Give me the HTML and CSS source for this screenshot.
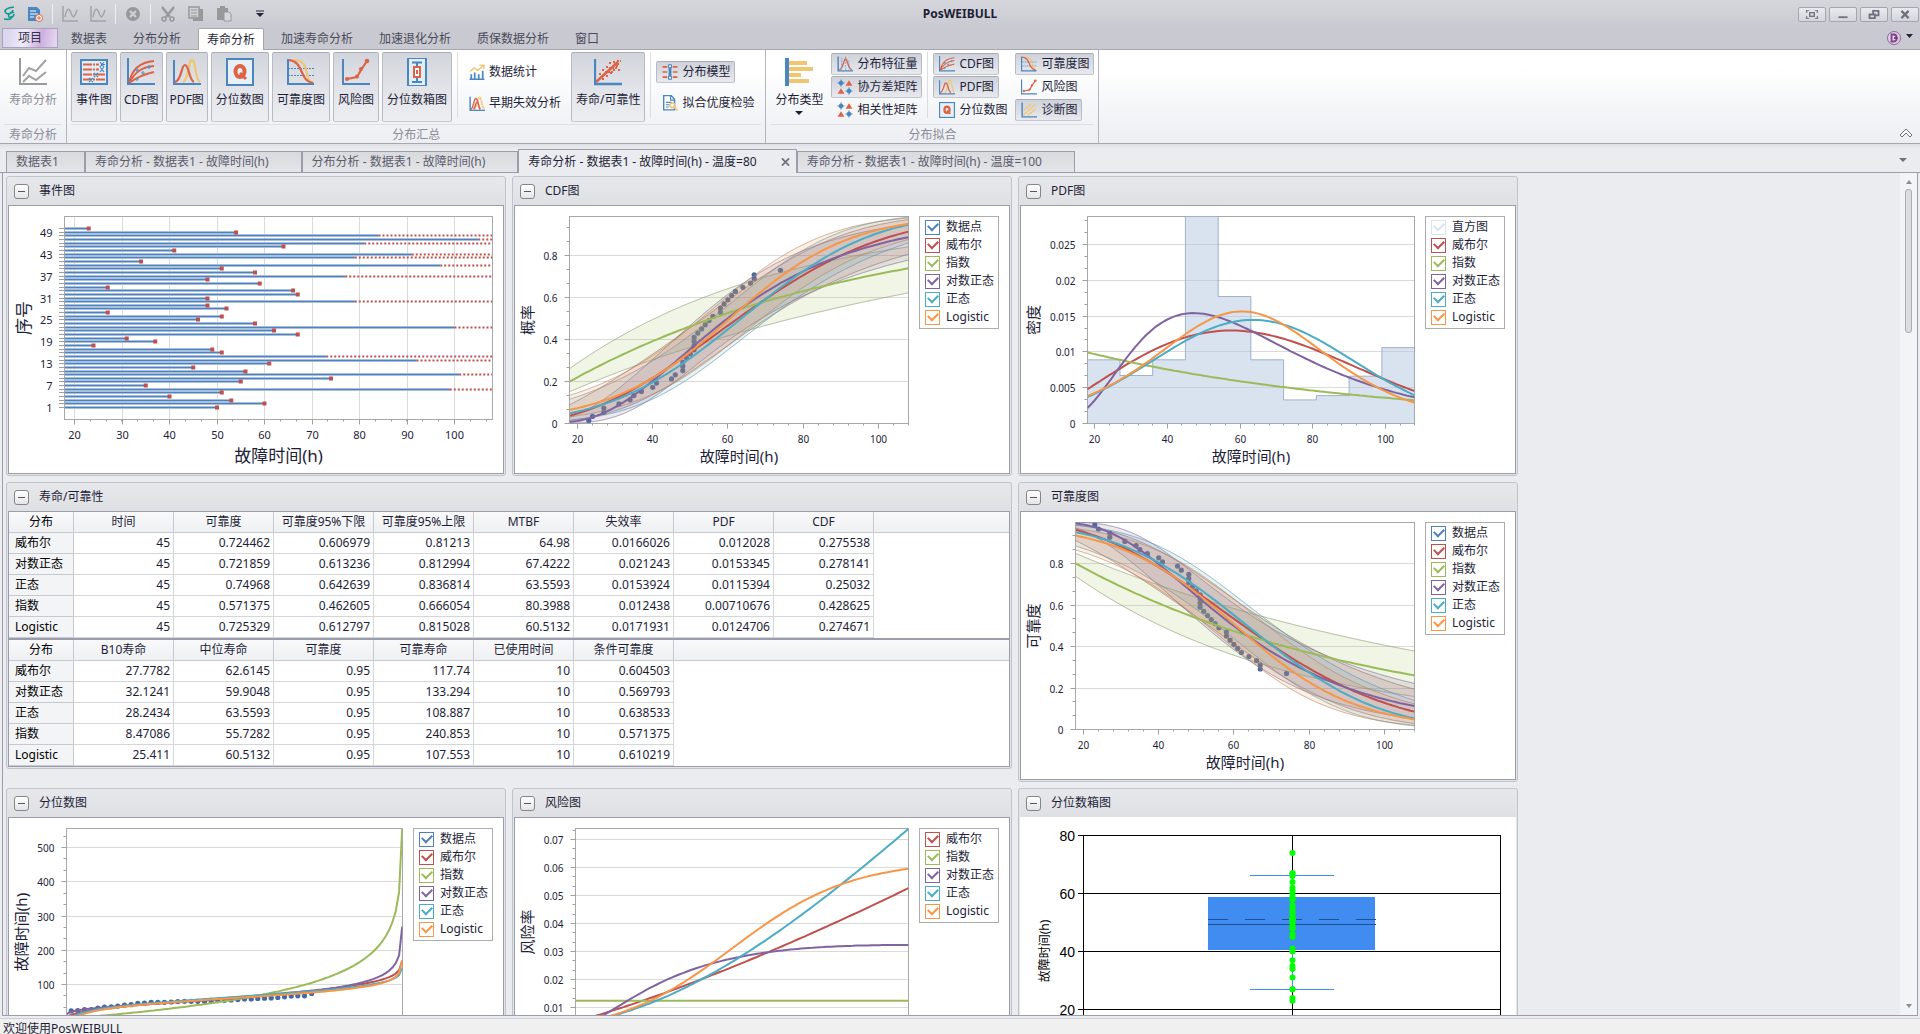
FILE: index.html
```html
<!DOCTYPE html>
<html lang="zh-CN">
<head>
  <meta charset="UTF-8" />
  <meta name="viewport" content="width=device-width, initial-scale=1.0" />
  <title>PosWEIBULL</title>
  <link rel="stylesheet" href="styles.css">
</head>
<body>
  <!-- Shared icons -->
  <svg class="sprite" aria-hidden="true">
    <symbol id="i-line" viewBox="0 0 28 28">
      <path d="M1 0V26H28" fill="none" stroke="#9a9a9a" stroke-width="2"/>
      <path d="M4 18L10 10L17 13L27 2M4 24L10 18L17 22L27 14" fill="none" stroke="#a2a2a2" stroke-width="2"/>
    </symbol>
    <symbol id="i-event" viewBox="0 0 28 28">
      <rect x="1" y="2" width="26" height="24" fill="#e3edf6" stroke="#4a86c0" stroke-width="2"/>
      <path d="M3 6.500H19M3 11.500H19M3 16.500H25M3 21.500H25" stroke="#dd6344" stroke-width="2" stroke-dasharray="9 1 2 1"/>
      <path d="M20 4l4 5M24 4l-4 5M21 6.500h4M20 9l4 5M24 9l-4 5M14 15l4 4M18 15l-4 4M9 20l4 4M13 20l-4 4" stroke="#4a86c0" stroke-width="1.200"/>
    </symbol>
    <symbol id="i-cdf" viewBox="0 0 28 28">
      <path d="M2 25C5 10 14 4 27 3M2 25C8 14 15 9 27 8M2 25C9 20 17 16 27 14" fill="none" stroke="#dd6344" stroke-width="1.900"/>
      <path d="M8 12h4M10 10v4M14 15h4M16 13v4M20 9h4M22 7v4M9 21h3M10 20v3" stroke="#5c93c7" stroke-width="1.200"/>
      <path d="M1 0V26H28" fill="none" stroke="#4a86c0" stroke-width="2"/>
    </symbol>
    <symbol id="i-pdf" viewBox="0 0 28 28">
      <path d="M10 24C16 22 15 2 19 2S22 22 27 24" fill="none" stroke="#f0c673" stroke-width="2.300"/>
      <path d="M2 24C9 22 8 7 12 7S16 22 21 24" fill="none" stroke="#dd6344" stroke-width="2.200"/>
      <path d="M1 2V26H28" fill="none" stroke="#4a86c0" stroke-width="2"/>
    </symbol>
    <symbol id="i-q" viewBox="0 0 28 28">
      <rect x="1" y="1" width="26" height="26" fill="#e8f0f7" stroke="#4a86c0" stroke-width="2"/>
      <ellipse cx="14" cy="13.500" rx="4.500" ry="5.500" fill="none" stroke="#dd6344" stroke-width="4"/>
      <path d="M14 15l6 6" stroke="#dd6344" stroke-width="3"/>
    </symbol>
    <symbol id="i-rel" viewBox="0 0 28 28">
      <path d="M1 10.500H27M1 17.500H27" stroke="#4a86c0" stroke-width="1.200" stroke-dasharray="2 1"/>
      <path d="M7 2C25 2 15 23 27 25" fill="none" stroke="#f0c673" stroke-width="2.200"/>
      <path d="M2 2C18 4 11 22 26 25" fill="none" stroke="#dd6344" stroke-width="2.200"/>
      <path d="M1 1V26H27" fill="none" stroke="#4a86c0" stroke-width="2"/>
    </symbol>
    <symbol id="i-risk" viewBox="0 0 28 28">
      <path d="M5 21L15 19L19 12L25 3" fill="none" stroke="#dd6344" stroke-width="2.200"/>
      <circle cx="5" cy="21" r="2" fill="#dd6344"/><circle cx="15" cy="18.500" r="2" fill="#dd6344"/><circle cx="19" cy="11" r="2" fill="#dd6344"/><circle cx="25" cy="3" r="2.300" fill="#dd6344"/>
      <path d="M1 1V26H28" fill="none" stroke="#4a86c0" stroke-width="2"/>
    </symbol>
    <symbol id="i-box" viewBox="0 0 28 28">
      <rect x="5" y="0" width="18" height="28" fill="#e3edf6" stroke="#4a86c0" stroke-width="2"/>
      <path d="M9 4.500H19M9 24H19M14 4V9M14 19V24" stroke="#4a86c0" stroke-width="2"/>
      <rect x="11" y="9" width="6" height="10" fill="#fff" stroke="#dd6344" stroke-width="2"/>
      <path d="M14 12v4" stroke="#dd6344" stroke-width="2"/>
    </symbol>
    <symbol id="i-scatter" viewBox="0 0 28 28">
      <path d="M2 24L24 4" stroke="#dd6344" stroke-width="2.500"/>
      <path d="M8 12h3M5 16h3M12 9h3M15 5h3M19 4h3M22 8h3M19 12h3M16 15h3M12 18h3M8 21h3M11 14h8M15 10h8M20 6h5M23 3h4M24 12h2M9 17h3" stroke="#dd6344" stroke-width="2.200" stroke-dasharray="2 1"/>
      <path d="M1 1V26H28" fill="none" stroke="#4a86c0" stroke-width="2.300"/>
    </symbol>
    <symbol id="i-types" viewBox="0 0 28 28">
      <path d="M3 5H22M3 11H28M3 17H16M3 23H24" stroke="#f0c673" stroke-width="4"/>
      <path d="M2 0V28" stroke="#4a86c0" stroke-width="4"/>
    </symbol>
    <symbol id="i-stats" viewBox="0 0 28 28">
      <path d="M4 18V27M10 15V27M17 18V27M24 12V27M1 27H27" stroke="#4a86c0" stroke-width="3"/>
      <path d="M2 13L9 7L15 11L25 3M18 2H26V9" fill="none" stroke="#f0c673" stroke-width="2.500"/>
    </symbol>
    <symbol id="i-early" viewBox="0 0 28 28">
      <path d="M9 25C15 20 14 4 18 4S22 20 27 25" fill="none" stroke="#f0c673" stroke-width="3" stroke-dasharray="4 1"/>
      <path d="M3 25C9 22 8 6 12 6S16 20 20 25M8 25C12 20 12 12 14 12S17 22 19 25" fill="none" stroke="#dd6344" stroke-width="2.500"/>
      <path d="M2 3V27H28" fill="none" stroke="#4a86c0" stroke-width="2.500"/>
    </symbol>
    <symbol id="i-model" viewBox="0 0 28 28">
      <path d="M1 5H9M1 14H9M1 23H9M19 5H27M19 14H27M19 23H27" stroke="#dd6344" stroke-width="3"/>
      <path d="M14 5V23" stroke="#4a86c0" stroke-width="5"/>
      <circle cx="14" cy="4" r="3" fill="#fff" stroke="#4a86c0" stroke-width="2"/><circle cx="14" cy="24" r="3" fill="#fff" stroke="#4a86c0" stroke-width="2"/>
    </symbol>
    <symbol id="i-fit" viewBox="0 0 28 28">
      <path d="M3 1H16L22 8V26H3Z" fill="#fff" stroke="#4a86c0" stroke-width="2.500"/>
      <path d="M15 1V9H22M7 13H17M7 17H13M7 21H12" fill="none" stroke="#4a86c0" stroke-width="2"/>
      <circle cx="18" cy="18" r="4" fill="#fff" stroke="#f0c673" stroke-width="3"/><path d="M21 21l6 6" stroke="#f0c673" stroke-width="3"/>
    </symbol>
    <symbol id="i-matrix" viewBox="0 0 28 28">
      <circle cx="7" cy="7" r="4" fill="#4a86c0"/><circle cx="21" cy="21" r="4" fill="#4a86c0"/>
      <path d="M1 7H13M7 1V13M15 21H27M21 15V27" stroke="#4a86c0" stroke-width="2"/>
      <path d="M21 2L27 12H15ZM7 16L13 26H1Z" fill="#dd6344"/>
    </symbol>
    <symbol id="i-feature" viewBox="0 0 28 28">
      <path d="M4 24C12 22 11 5 15 5S18 22 26 24" fill="none" stroke="#dd6344" stroke-width="2.500"/>
      <path d="M8 3V24M15 1V24M21 8V24" stroke="#6b9ccc" stroke-width="1.500" stroke-dasharray="3 2"/>
      <path d="M2 1V26H28" fill="none" stroke="#4a86c0" stroke-width="2.500"/>
    </symbol>
    <symbol id="i-diag" viewBox="0 0 28 28">
      <path d="M4 23L25 4M5 14L17 4M12 23L26 12" stroke="#f0c673" stroke-width="3" stroke-dasharray="4 1"/>
      <path d="M2 1V26H28" fill="none" stroke="#4a86c0" stroke-width="2.500"/>
    </symbol>
    <symbol id="i-wave" viewBox="0 0 16 16">
      <path d="M1 0V15H16" fill="none" stroke="#a3a3a6" stroke-width="1.500"/>
      <path d="M3 11C5 1 7 2 9 7S12 13 15 4" fill="none" stroke="#a3a3a6" stroke-width="1.500"/>
    </symbol>
  </svg>

  <div class="app">
    <header class="titlebar">
      <div class="quick">
        <svg class="logo" viewBox="0 0 12 16"><path d="M11 1C2 2 1 5 3 7S9 7 10 4M11 7C9 5 4 9 6 11S11 10 11 8M1 13C7 14 9 13 8 10" fill="none" stroke="#109a94" stroke-width="1.600"/></svg>
        <button aria-label="新建项目"><svg viewBox="0 0 16 16"><path d="M1 1H10L13 4V15H1Z" fill="#4a86c0"/><path d="M3 5H9M3 8H11M3 11H7" stroke="#fff"/><circle cx="12" cy="12" r="3.500" fill="#fff" stroke="#dd6344"/><path d="M10 12H14M12 10V14" stroke="#dd6344"/></svg></button>
        <i class="bar"></i>
        <button aria-label="图表一"><svg><use href="#i-wave"/></svg></button>
        <button aria-label="图表二"><svg><use href="#i-wave"/></svg></button>
        <i class="bar"></i>
        <button aria-label="关闭"><svg viewBox="0 0 16 16"><circle cx="8" cy="8" r="7" fill="#98989b"/><path d="M5 5l6 6M11 5l-6 6" stroke="#d0d0d5" stroke-width="2.200"/></svg></button>
        <i class="bar"></i>
        <button aria-label="剪切"><svg viewBox="0 0 16 16"><path d="M2 1L10 11M14 1L6 11" stroke="#98989b" stroke-width="2.500"/><circle cx="4" cy="13" r="2" fill="none" stroke="#98989b" stroke-width="1.500"/><circle cx="12" cy="13" r="2" fill="none" stroke="#98989b" stroke-width="1.500"/></svg></button>
        <button aria-label="复制"><svg viewBox="0 0 16 16"><path d="M5 3H15V15H5Z" fill="#98989b"/><path d="M1 1H11V12H1Z" fill="#d0d0d5" stroke="#98989b" stroke-width="1.500"/><path d="M3 4H9M3 7H9M3 10H9" stroke="#98989b"/></svg></button>
        <button aria-label="粘贴"><svg viewBox="0 0 16 16"><path d="M1 2H12V14H1ZM4 0H9V3H4Z" fill="#98989b"/><path d="M8 6H13L15 8V15H8Z" fill="#d8d8dc" stroke="#98989b"/></svg></button>
        <button class="more" aria-label="更多"><svg viewBox="0 0 8 8"><path d="M0 1H8" stroke="#23233a"/><path d="M0 3H8L4 7Z" fill="#23233a"/></svg></button>
      </div>
      <h1>PosWEIBULL</h1>
      <div class="window-buttons">
        <button aria-label="全屏"><svg viewBox="0 0 12 10"><path d="M0 3V0H3M9 0H12V3M12 7V10H9M3 10H0V7" fill="none" stroke="#6f7180" stroke-width="1.500"/><rect x="3.500" y="3" width="5" height="4" fill="none" stroke="#6f7180" stroke-width="1.500"/></svg></button>
        <button aria-label="最小化"><svg viewBox="0 0 12 10"><path d="M1 8H11" stroke="#6f7180" stroke-width="2"/></svg></button>
        <button aria-label="还原"><svg viewBox="0 0 12 10"><path d="M5 4V1H11V6H8M1 5H7V9H1Z" fill="none" stroke="#6f7180" stroke-width="2"/></svg></button>
        <button aria-label="关闭窗口"><svg viewBox="0 0 12 10"><path d="M2 1L10 9M10 1L2 9" stroke="#6f7180" stroke-width="2.500"/></svg></button>
      </div>
    </header>

    <nav class="menu">
      <button class="project">项目</button>
      <button>数据表</button>
      <button>分布分析</button>
      <button class="active">寿命分析</button>
      <button>加速寿命分析</button>
      <button>加速退化分析</button>
      <button>质保数据分析</button>
      <button>窗口</button>
      <span class="badge"><svg viewBox="0 0 28 16"><circle cx="8" cy="8" r="6.500" fill="#e9c8ec" stroke="#8a6a92"/><path d="M5.500 4.500H8C11.500 4.500 11.500 11.500 8 11.500H5.500ZM8 8H12" fill="none" stroke="#704a80" stroke-width="1.800"/><path d="M20 4H27L23.500 8Z" fill="#23233a"/></svg></span>
    </nav>

    <section class="ribbon">
      <div class="group">
        <div class="tools">
          <button class="big disabled"><svg><use href="#i-line"/></svg>寿命分析</button>
        </div>
        <h2>寿命分析</h2>
      </div>
      <div class="group">
        <div class="tools">
          <button class="big on"><svg><use href="#i-event"/></svg>事件图</button>
          <button class="big on narrow"><svg><use href="#i-cdf"/></svg>CDF图</button>
          <button class="big on narrow"><svg><use href="#i-pdf"/></svg>PDF图</button>
          <button class="big on"><svg><use href="#i-q"/></svg>分位数图</button>
          <button class="big on"><svg><use href="#i-rel"/></svg>可靠度图</button>
          <button class="big on"><svg><use href="#i-risk"/></svg>风险图</button>
          <button class="big on"><svg><use href="#i-box"/></svg>分位数箱图</button>
          <i class="line"></i>
          <div class="stack two">
            <button><svg><use href="#i-stats"/></svg>数据统计</button>
            <button><svg><use href="#i-early"/></svg>早期失效分析</button>
          </div>
          <button class="big on"><svg><use href="#i-scatter"/></svg>寿命/可靠性</button>
          <i class="line"></i>
          <div class="stack two">
            <button class="on"><svg><use href="#i-model"/></svg>分布模型</button>
            <button><svg><use href="#i-fit"/></svg>拟合优度检验</button>
          </div>
        </div>
        <h2>分布汇总</h2>
      </div>
      <div class="group">
        <div class="tools">
          <button class="big"><svg><use href="#i-types"/></svg>分布类型<i class="caret"></i></button>
          <div class="stack">
            <button class="on"><svg><use href="#i-feature"/></svg>分布特征量</button>
            <button class="on"><svg><use href="#i-matrix"/></svg>协方差矩阵</button>
            <button><svg><use href="#i-matrix"/></svg>相关性矩阵</button>
          </div>
          <i class="line"></i>
          <div class="stack">
            <button class="on"><svg><use href="#i-cdf"/></svg>CDF图</button>
            <button class="on"><svg><use href="#i-pdf"/></svg>PDF图</button>
            <button><svg><use href="#i-q"/></svg>分位数图</button>
          </div>
          <div class="stack">
            <button class="on"><svg><use href="#i-rel"/></svg>可靠度图</button>
            <button><svg><use href="#i-risk"/></svg>风险图</button>
            <button class="on"><svg><use href="#i-diag"/></svg>诊断图</button>
          </div>
        </div>
        <h2>分布拟合</h2>
      </div>
      <button class="fold" aria-label="折叠功能区"><svg viewBox="0 0 14 10"><path d="M1 7L7 1L13 7L11 9L7 5L3 9Z" fill="#fff" stroke="#6f7180"/></svg></button>
    </section>

    <div class="doc-tabs">
      <div class="doc-tab short"><button>数据表1</button></div>
      <div class="doc-tab"><button>寿命分析 - 数据表1 - 故障时间(h)</button></div>
      <div class="doc-tab"><button>分布分析 - 数据表1 - 故障时间(h)</button></div>
      <div class="doc-tab active"><button>寿命分析 - 数据表1 - 故障时间(h) - 温度=80</button><button class="close" aria-label="关闭标签"><svg viewBox="0 0 10 8"><path d="M1 0L9 8M9 0L1 8" stroke="#6f7180" stroke-width="2"/></svg></button></div>
      <div class="doc-tab"><button>寿命分析 - 数据表1 - 故障时间(h) - 温度=100</button></div>
      <button class="tab-list" aria-label="标签列表"><i class="caret"></i></button>
    </div>

    <main class="workspace">
      <div class="panels">
        <section class="panel">
          <header><button aria-label="折叠"></button><h3>事件图</h3></header>
          <div class="body" id="event"></div>
        </section>
        <section class="panel">
          <header><button aria-label="折叠"></button><h3>CDF图</h3></header>
          <div class="body" id="cdf"></div>
        </section>
        <section class="panel">
          <header><button aria-label="折叠"></button><h3>PDF图</h3></header>
          <div class="body" id="pdf"></div>
        </section>

        <section class="panel wide">
          <header><button aria-label="折叠"></button><h3>寿命/可靠性</h3></header>
          <div class="body tables">
            <table>
              <thead><tr><th>分布</th><th>时间</th><th>可靠度</th><th>可靠度95%下限</th><th>可靠度95%上限</th><th>MTBF</th><th>失效率</th><th>PDF</th><th>CDF</th><th class="rest"></th></tr></thead>
              <tbody>
                <tr><th>威布尔</th><td>45</td><td>0.724462</td><td>0.606979</td><td>0.81213</td><td>64.98</td><td>0.0166026</td><td>0.012028</td><td>0.275538</td></tr>
                <tr><th>对数正态</th><td>45</td><td>0.721859</td><td>0.613236</td><td>0.812994</td><td>67.4222</td><td>0.021243</td><td>0.0153345</td><td>0.278141</td></tr>
                <tr><th>正态</th><td>45</td><td>0.74968</td><td>0.642639</td><td>0.836814</td><td>63.5593</td><td>0.0153924</td><td>0.0115394</td><td>0.25032</td></tr>
                <tr><th>指数</th><td>45</td><td>0.571375</td><td>0.462605</td><td>0.666054</td><td>80.3988</td><td>0.012438</td><td>0.00710676</td><td>0.428625</td></tr>
                <tr><th>Logistic</th><td>45</td><td>0.725329</td><td>0.612797</td><td>0.815028</td><td>60.5132</td><td>0.0171931</td><td>0.0124706</td><td>0.274671</td></tr>
              </tbody>
            </table>
            <table>
              <thead><tr><th>分布</th><th>B10寿命</th><th>中位寿命</th><th>可靠度</th><th>可靠寿命</th><th>已使用时间</th><th>条件可靠度</th><th class="rest"></th></tr></thead>
              <tbody>
                <tr><th>威布尔</th><td>27.7782</td><td>62.6145</td><td>0.95</td><td>117.74</td><td>10</td><td>0.604503</td></tr>
                <tr><th>对数正态</th><td>32.1241</td><td>59.9048</td><td>0.95</td><td>133.294</td><td>10</td><td>0.569793</td></tr>
                <tr><th>正态</th><td>28.2434</td><td>63.5593</td><td>0.95</td><td>108.887</td><td>10</td><td>0.638533</td></tr>
                <tr><th>指数</th><td>8.47086</td><td>55.7282</td><td>0.95</td><td>240.853</td><td>10</td><td>0.571375</td></tr>
                <tr><th>Logistic</th><td>25.411</td><td>60.5132</td><td>0.95</td><td>107.553</td><td>10</td><td>0.610219</td></tr>
              </tbody>
            </table>
          </div>
        </section>
        <section class="panel">
          <header><button aria-label="折叠"></button><h3>可靠度图</h3></header>
          <div class="body" id="rel"></div>
        </section>

        <section class="panel">
          <header><button aria-label="折叠"></button><h3>分位数图</h3></header>
          <div class="body" id="quantile"></div>
        </section>
        <section class="panel">
          <header><button aria-label="折叠"></button><h3>风险图</h3></header>
          <div class="body" id="hazard"></div>
        </section>
        <section class="panel">
          <header><button aria-label="折叠"></button><h3>分位数箱图</h3></header>
          <div class="body plain" id="box"></div>
        </section>
      </div>
      <div class="scrollbar"><i class="up"></i><i class="thumb"></i><i class="down"></i></div>
    </main>

    <footer class="status"><span>欢迎使用PosWEIBULL</span></footer>
  </div>

  <script src="charts.js"></script>
</body>
</html>
```
FILE: styles.css
```css
:root {
  --text: #1e1e38;
  --muted: #8b8c96;
  --frame: #9b9cac;
  --panel-border: #c1c3ca;
  --page: #ebecef;
}

* {
  margin: 0;
  padding: 0;
  box-sizing: border-box;
}

body {
  font-family: "Noto Sans", "Noto Sans CJK SC", sans-serif;
  font-size: 12px;
  line-height: 16px;
  color: var(--text);
  background: var(--page);
}

button {
  font: inherit;
  color: inherit;
  background: none;
  border: 0;
  white-space: nowrap;
}

h1, h2, h3 {
  font-size: 12px;
  font-weight: normal;
}

svg {
  display: block;
}

.sprite {
  display: none;
}

.app {
  display: flex;
  flex-direction: column;
  height: 100vh;
  overflow: hidden;
}

/* Title bar */
.titlebar {
  display: grid;
  grid-template-columns: 1fr auto 1fr;
  align-items: center;
  height: 28px;
  background: linear-gradient(#d6d7dc, #c9c9d1);
}

.titlebar h1 {
  font-weight: bold;
}

.quick {
  display: flex;
  align-items: center;
  gap: 12px;
  padding-left: 3px;
}

.quick svg {
  width: 16px;
  height: 16px;
}

.quick .logo {
  width: 12px;
}

.quick .bar {
  width: 1px;
  height: 20px;
  margin: 0 -3px;
  background: #eeeef2;
}

.quick .more {
  margin-left: 12px;
}

.quick .more svg {
  width: 8px;
  height: 8px;
}

.window-buttons {
  display: flex;
  justify-content: flex-end;
  gap: 3px;
  padding-right: 1px;
}

.window-buttons button {
  display: grid;
  place-items: center;
  width: 28px;
  height: 15px;
  border: 1px solid #a3a5b0;
  border-radius: 2px;
  background: linear-gradient(#e9eaee, #d5d6dc);
}

.window-buttons svg {
  width: 12px;
  height: 9px;
}

/* Ribbon tabs */
.menu {
  display: flex;
  align-items: flex-end;
  gap: 8px;
  height: 22px;
  padding-left: 2px;
  background: #c9c9d1;
  border-bottom: 1px solid #a5a6b0;
  color: #4a4b5a;
}

.menu button {
  height: 21px;
  padding: 0 9px;
  line-height: 22px;
}

.menu .project {
  width: 56px;
  height: 20px;
  margin-right: -4px;
  margin-bottom: 1px;
  border: 1px solid #a7a2bd;
  line-height: 18px;
  color: #33334a;
  background: linear-gradient(100deg, #dcd6ee 10%, #f0ebf8 40%, #cfaede 70%, #e6dcf3);
}

.menu .active {
  height: 22px;
  margin-bottom: -1px;
  border: 1px solid #a5a6b0;
  border-bottom: 0;
  border-radius: 2px 2px 0 0;
  padding: 0 8px;
  background: #fff;
  color: var(--text);
}

.badge {
  margin-left: auto;
  margin-right: 6px;
  padding-bottom: 3px;
}

.badge svg {
  width: 28px;
  height: 16px;
}

/* Ribbon */
.ribbon {
  display: flex;
  position: relative;
  height: 94px;
  border-bottom: 1px solid #a5a6b0;
  background: linear-gradient(#fff 20%, #eceef2);
}

.group {
  display: flex;
  flex-direction: column;
  padding: 2px 4px 0;
  border-right: 1px solid #b4b5bf;
}

.group h2 {
  flex: 1;
  min-height: 0;
  margin-top: 2px;
  border-top: 1px solid #dedfe4;
  text-align: center;
  line-height: 20px;
  color: var(--muted);
}

.tools {
  display: flex;
  flex: none;
  gap: 3px;
  height: 70px;
}

.big {
  display: flex;
  flex-direction: column;
  align-items: center;
  padding: 5px 4px 0;
  border: 1px solid transparent;
  border-radius: 2px;
}

.big.narrow {
  padding: 5px 3px 0;
}

.big svg {
  width: 28px;
  height: 28px;
  margin-bottom: 6px;
}

.group .on {
  border-color: #a9abb7 #b9bbc4 #c5c7cf;
  background: linear-gradient(#cfd2da, #e8e9ee);
}

.group .big.on {
  background: linear-gradient(#d2d5dc, #e1e3e8 50%, #eceef1);
}

.big.disabled {
  color: var(--muted);
}

.caret {
  width: 0;
  height: 0;
  margin-top: 3px;
  border: 4px solid transparent;
  border-top-color: var(--text);
  border-bottom: 0;
}

.line {
  width: 1px;
  height: 66px;
  margin: 0 2px;
  background: #dcdde2;
}

.stack {
  display: flex;
  flex-direction: column;
  align-items: flex-start;
  gap: 1px;
  padding-top: 1px;
}

.stack.two {
  gap: 9px;
  padding: 9px 2px 0 0;
}

.stack button {
  display: flex;
  align-items: center;
  gap: 4px;
  height: 22px;
  padding: 0 4px 0 5px;
  border: 1px solid transparent;
  border-radius: 2px;
}

.stack svg {
  width: 16px;
  height: 16px;
}

.fold {
  margin: auto 7px 5px auto;
}

.fold svg {
  width: 14px;
  height: 10px;
}

/* Document tabs */
.doc-tabs {
  display: flex;
  align-items: flex-end;
  height: 29px;
  padding: 0 6px;
  border-bottom: 1px solid var(--frame);
  background: linear-gradient(#dfe0e4, var(--page) 5px);
  color: #5b5c6c;
}

.doc-tab {
  display: flex;
  align-items: center;
  height: 21px;
  padding: 0 32px 0 9px;
  border: 1px solid var(--frame);
  border-bottom: 0;
  background: linear-gradient(#d9dade, #e4e5e8);
}

.doc-tab.short {
  padding-right: 25px;
}

.doc-tab.active {
  height: 24px;
  margin-bottom: -1px;
  padding-right: 6px;
  background: var(--page);
  color: var(--text);
}

.close {
  margin-left: 24px;
}

.close svg {
  width: 9px;
  height: 8px;
}

.tab-list {
  margin: 0 7px 10px auto;
}

.tab-list .caret {
  display: block;
  border-top-color: #6f7180;
}

/* Workspace */
.workspace {
  display: flex;
  flex: 1;
  min-height: 0;
  margin: 0 2px;
  border: 1px solid var(--frame);
  border-top: 0;
  overflow: hidden;
}

.panels {
  display: grid;
  flex: 1;
  grid-template-columns: repeat(3, minmax(400px, 500px));
  align-content: start;
  align-items: start;
  gap: 6px;
  padding: 3px;
}

.panel {
  border: 1px solid var(--panel-border);
  border-radius: 3px;
  padding: 0 1px 1px;
  background: #e4e5e9;
}

.panel.wide {
  grid-column: span 2;
}

.panel header {
  display: flex;
  align-items: center;
  gap: 10px;
  height: 28px;
  padding-left: 6px;
  background: linear-gradient(#e7e8eb, #dfe0e4);
}

.panel header button {
  display: grid;
  place-items: center;
  width: 15px;
  height: 15px;
  border: 1px solid #85868c;
  border-radius: 3px;
  background: linear-gradient(#fff, #e5e5e5);
}

.panel header button::before {
  content: "";
  width: 7px;
  height: 1px;
  background: #55565e;
}

.body {
  display: flex;
  align-items: flex-start;
  border: 1px solid var(--frame);
  background: #fff;
}

.body.plain {
  border-color: #fff;
}

.plot {
  flex: 1;
  min-width: 0;
  height: 267px;
}

.plot text {
  fill: var(--text);
  font-size: 10px;
}

.plot.large text {
  font-size: 11px;
}

.plot .title {
  font-size: 15px;
  text-anchor: middle;
}

.plot.large .title {
  font-size: 17px;
}

.plot .title.small {
  font-size: 12px;
  fill: #000;
}

.plot .arial {
  font-family: "Liberation Sans", sans-serif;
  font-size: 14px;
  fill: #000;
}

.legend {
  width: 80px;
  margin: 10px 10px 0 0;
  padding: 1px 0 2px 5px;
  border: 1px solid #adadad;
}

.legend label {
  display: flex;
  align-items: center;
  gap: 6px;
  height: 18px;
  white-space: nowrap;
}

.legend input {
  appearance: none;
  display: grid;
  place-items: center;
  width: 15px;
  height: 15px;
  border: 1px solid currentColor;
}

.legend input:checked::before {
  content: "";
  width: 8px;
  height: 5px;
  margin-bottom: 3px;
  border: solid currentColor;
  border-width: 0 0 2px 2px;
  transform: rotate(-45deg);
}

.blue { color: #4f81bd; }
.red { color: #c0504d; }
.green { color: #9bbb59; }
.purple { color: #8064a2; }
.teal { color: #4bacc6; }
.orange { color: #f79646; }
.pale { color: #d9e4f0; }

/* Result tables */
.tables {
  flex-direction: column;
}

.tables table {
  width: 100%;
  table-layout: fixed;
  border-spacing: 0;
}

.tables table + table {
  border-top: 2px solid var(--frame);
}

.tables th,
.tables td {
  width: 100px;
  height: 21px;
  padding: 0 3px;
  border: solid #d4d6db;
  border-width: 0 1px 1px 0;
  font-weight: normal;
  text-align: right;
  line-height: 20px;
  white-space: nowrap;
}

.tables th {
  border-color: #c6c9d1;
}

.tables th:first-child {
  width: 65px;
  padding-left: 6px;
  text-align: left;
  background: #f3f4f6;
  color: #000;
}

.tables thead th,
.tables thead th:first-child {
  padding: 0;
  text-align: center;
  background: linear-gradient(#f9f9fa, #eef0f2);
}

.tables thead .rest {
  width: auto;
  border-right: 0;
}

/* Scrollbar */
.scrollbar {
  display: flex;
  flex-direction: column;
  align-items: center;
  width: 17px;
  padding: 7px 0;
  background: #f3f4f6;
}

.scrollbar .up,
.scrollbar .down {
  border: 3px solid transparent;
  border-top: 0;
  border-bottom: 4px solid #8a8b96;
}

.scrollbar .down {
  margin-top: auto;
  transform: rotate(180deg);
}

.scrollbar .thumb {
  width: 7px;
  height: 144px;
  margin-top: 5px;
  border: 1px solid #a9abb5;
  border-radius: 3px;
  background: #dcdde1;
}

/* Status bar */
.status {
  flex: none;
  height: 16px;
  margin-top: 2px;
  padding: 0 3px;
  border-top: 1px solid #cfd0d4;
  background: #f0f0f0;
  overflow: hidden;
  line-height: 20px;
}
```
FILE: charts.js
```js
const COLORS = {
  blue: '#4f81bd', red: '#c0504d', green: '#9bbb59',
  purple: '#8064a2', teal: '#4bacc6', orange: '#f79646'
};

// Unit order 1..50, negative = censored
const UNITS = [
  50, 60, 53, 40, 51, -99, 35, 55, 74, -101, 56, 45, 61, -92, -73, 51, 49, 24, 37, 31,
  67, 62, -100, 58, 46, 51, 27, 52, 48, -79, 48, 67, 66, 27, 59, 48, -77, 58, 51, -97,
  34, -79, -91, 41, 64, -81, -105, -84, 54, 23
];

// Median ranks, adjusted for suspended units
function medianRanks() {
  const sorted = UNITS.slice().sort((a, b) => Math.abs(a) - Math.abs(b));
  const n = sorted.length;
  const points = [];
  let order = 0;
  sorted.forEach((v, i) => {
    if (v < 0) return;
    order += (n + 1 - order) / (1 + n - i);
    points.push({ t: v, p: (order - 0.3) / (n + 0.4) });
  });
  return points;
}
const RANKS = medianRanks();

const phi = z => Math.exp(-z * z / 2) / Math.sqrt(2 * Math.PI);

function normCdf(z) {
  const k = 1 / (1 + 0.2316419 * Math.abs(z));
  const tail = phi(z) * k * (0.319381530 + k * (-0.356563782 + k * (1.781477937 + k * (-1.821255978 + k * 1.330274429))));
  return z > 0 ? 1 - tail : tail;
}

function normInv(p) {
  let lo = -6, hi = 6;
  for (let i = 0; i < 50; i++) {
    const mid = (lo + hi) / 2;
    if (normCdf(mid) < p) lo = mid; else hi = mid;
  }
  return (lo + hi) / 2;
}

// band: CDF limits [low, high] at t = 18, 45, 108
const DISTS = [
  {
    name: '威布尔', color: 'red',
    cdf: t => 1 - Math.exp(-Math.pow(t / 73.342, 2.3178)),
    pdf: t => 2.3178 / 73.342 * Math.pow(t / 73.342, 1.3178) * Math.exp(-Math.pow(t / 73.342, 2.3178)),
    inv: p => 73.342 * Math.pow(-Math.log(1 - p), 1 / 2.3178),
    band: [[0.014, 0.09], [0.188, 0.393], [0.806, 0.971]]
  },
  {
    name: '指数', color: 'green',
    cdf: t => 1 - Math.exp(-0.012438 * t),
    pdf: t => 0.012438 * Math.exp(-0.012438 * t),
    inv: p => -Math.log(1 - p) / 0.012438,
    band: [[0.152, 0.263], [0.334, 0.537], [0.622, 0.841]]
  },
  {
    name: '对数正态', color: 'purple', logTime: true,
    cdf: t => normCdf((Math.log(t) - 4.0928) / 0.4862),
    pdf: t => phi((Math.log(t) - 4.0928) / 0.4862) / (t * 0.4862),
    inv: p => Math.exp(4.0928 + 0.4862 * normInv(p)),
    band: [[0.001, 0.03], [0.187, 0.387], [0.778, 0.948]]
  },
  {
    name: '正态', color: 'teal',
    cdf: t => normCdf((t - 63.5593) / 27.56),
    pdf: t => phi((t - 63.5593) / 27.56) / 27.56,
    inv: p => 63.5593 + 27.56 * normInv(p),
    band: [[0.016, 0.116], [0.163, 0.357], [0.86, 0.9825]]
  },
  {
    name: 'Logistic', color: 'orange',
    cdf: t => 1 / (1 + Math.exp(-(t - 60.5132) / 15.976)),
    pdf: t => {
      const f = 1 / (1 + Math.exp(-(t - 60.5132) / 15.976));
      return f * (1 - f) / 15.976;
    },
    inv: p => 60.5132 + 15.976 * Math.log(p / (1 - p)),
    band: [[0.032, 0.135], [0.185, 0.387], [0.876, 0.979]]
  }
];

const logit = p => Math.log(p / (1 - p));

function limit(d, t, side) {
  const knots = [18, 45, 108];
  const s = d.logTime ? Math.log : v => v;
  let offset = 0;
  knots.forEach((a, i) => {
    let w = logit(d.band[i][side]) - logit(d.cdf(a));
    knots.forEach((b, j) => { if (i !== j) w *= (s(t) - s(b)) / (s(a) - s(b)); });
    offset += w;
  });
  return 1 / (1 + Math.exp(-(logit(d.cdf(t)) + offset)));
}

const TIMES = [];
for (let t = 18; t <= 108; t++) TIMES.push(t);

// o: plot edges, x/y = [value, pixel, value, pixel], ticks and titles
function frame(o) {
  const sx = v => o.x[1] + (v - o.x[0]) * (o.x[3] - o.x[1]) / (o.x[2] - o.x[0]);
  const sy = v => o.y[1] + (v - o.y[0]) * (o.y[3] - o.y[1]) / (o.y[2] - o.y[0]);
  return { ...o, sx, sy };
}

function path(f, pts) {
  return 'M' + pts.map(p => f.sx(p[0]).toFixed(1) + ' ' + f.sy(p[1]).toFixed(1)).join('L');
}

function curve(f, pts, color) {
  return `<path d="${path(f, pts)}" fill="none" stroke="${COLORS[color]}" stroke-width="2"/>`;
}

function dots(f, pts) {
  return pts.map(p => `<circle cx="${f.sx(p[0]).toFixed(1)}" cy="${f.sy(p[1]).toFixed(1)}" r="2.6" fill="#426ba5"/>`).join('');
}

function axes(f) {
  let grid = '', marks = '';
  const line = (x1, y1, x2, y2, c) => `<path d="M${x1} ${y1}L${x2} ${y2}" stroke="${c}"/>`;
  const snap = v => Math.floor(v) + 0.5;
  (f.xTicks || []).forEach(v => {
    const x = snap(f.sx(v));
    if (f.gridX) grid += line(x, f.top, x, f.bottom, '#dadada');
    marks += line(x, f.bottom, x, f.bottom + 5, '#a0a0a0');
    marks += `<text x="${x}" y="${f.bottom + 19}" text-anchor="middle">${v}</text>`;
  });
  (f.yTicks || []).forEach(v => {
    const y = snap(f.sy(v));
    if (!f.gridX) {
      grid += line(f.left, y, f.right, y, '#dadada');
      marks += line(f.left - 5, y, f.left, y, '#a0a0a0');
    }
    marks += `<text x="${f.left - 12}" y="${y + 4}" text-anchor="end">${v}</text>`;
  });
  if (f.xMinor) {
    for (let v = f.xTicks[0]; v <= 108.01; v += f.xMinor) {
      marks += line(snap(f.sx(v)), f.bottom, snap(f.sx(v)), f.bottom + 2, '#a0a0a0');
    }
  }
  if (f.yMinor) {
    for (let v = 0; f.sy(v) >= f.top; v += f.yMinor) {
      marks += line(f.left - 3, snap(f.sy(v)), f.left, snap(f.sy(v)), '#a0a0a0');
    }
  }
  return { grid, marks };
}

function draw(id, f, content, legend) {
  const a = axes(f);
  const cy = (f.top + f.bottom) / 2;
  const size = f.size || '';
  const yx = size ? 21 : 18;
  const width = legend ? 404 : 494;
  let html = `<svg class="plot ${size}" viewBox="0 0 ${width} 267" role="img">
    <clipPath id="clip-${id}"><rect x="${f.left}" y="${f.top}" width="${f.right - f.left}" height="${f.bottom - f.top}"/></clipPath>
    ${a.grid}<rect x="${f.left}" y="${f.top}" width="${f.right - f.left}" height="${f.bottom - f.top}" fill="none" stroke="#a8a8a8"/>
    <g clip-path="url(#clip-${id})">${content}</g>${a.marks}
    <text class="title" x="${(f.left + f.right) / 2}" y="256">${f.xTitle || '故障时间(h)'}</text>
    <text class="title" transform="translate(${yx} ${cy}) rotate(-90)">${f.yTitle}</text>
  </svg>`;
  if (legend) {
    html += '<div class="legend">' + legend.map(item =>
      `<label><input type="checkbox" class="${item[1]}" checked>${item[0]}</label>`).join('') + '</div>';
  }
  document.getElementById(id).innerHTML = html;
}

const distLegend = DISTS.map(d => [d.name, d.color]);
const pointLegend = [['数据点', 'blue'], ...distLegend];
const T_TICKS = [20, 40, 60, 80, 100];

// Event chart
(function () {
  const f = frame({
    left: 55.5, right: 483.5, top: 10.5, bottom: 213.5,
    x: [20, 65.5, 100, 445.5], y: [1, 201.5, 50, 22.7],
    xTicks: [20, 30, 40, 50, 60, 70, 80, 90, 100], xMinor: 10 / 3, gridX: true,
    yTicks: [1, 7, 13, 19, 25, 31, 37, 43, 49], yTitle: '序号', size: 'large'
  });
  let bars = '', ends = '', ticks = '';
  UNITS.forEach((v, i) => {
    const y = Math.floor(f.sy(i + 1)) + 0.5;
    const x = f.sx(Math.abs(v));
    bars += `<path d="M56 ${y}H${x}" stroke="#a7c0de" stroke-width="3"/><path d="M56 ${y}H${x}" stroke="#4f81bd"/>`;
    ends += v < 0
      ? `<path d="M${x} ${y}H483" stroke="#c0504d" stroke-width="2" stroke-dasharray="2 2"/>`
      : `<rect x="${x - 2}" y="${y - 2}" width="4" height="4" fill="#c0504d"/>`;
    ticks += `<path d="M50 ${y}H55" stroke="#a0a0a0"/>`;
  });
  draw('event', f, bars + ends);
  document.querySelector('#event svg').insertAdjacentHTML('beforeend', ticks);
})();

// CDF and reliability share the same bands
function probability(id, f, value) {
  let bands = '', lines = '';
  DISTS.forEach(d => {
    const low = TIMES.map(t => [t, value(limit(d, t, 0))]);
    const high = TIMES.map(t => [t, value(limit(d, t, 1))]);
    bands += `<path d="${path(f, low.concat(high.slice().reverse()))}Z" fill="${COLORS[d.color]}" fill-opacity=".15"/>`;
    bands += `<path d="${path(f, low)}${path(f, high)}" fill="none" stroke="${COLORS[d.color]}" stroke-opacity=".35"/>
      <path d="${path(f, low)}${path(f, high)}" fill="none" stroke="#777" stroke-opacity=".3"/>`;
    lines += curve(f, TIMES.map(t => [t, value(d.cdf(t))]), d.color);
  });
  draw(id, f, dots(f, RANKS.map(r => [r.t, value(r.p)])) + bands + lines, pointLegend);
}

probability('cdf', frame({
  left: 54.5, right: 393.5, top: 10.5, bottom: 217.5,
  x: [20, 62.5, 100, 363.3], y: [0, 217.5, 0.8, 49.5],
  xTicks: T_TICKS, xMinor: 4, yTicks: [0, 0.2, 0.4, 0.6, 0.8], yMinor: 0.2 / 3, yTitle: '概率'
}), p => p);

probability('rel', frame({
  left: 54.5, right: 393.5, top: 10.5, bottom: 217.5,
  x: [20, 62.5, 100, 363.3], y: [0, 217.5, 0.8, 51.5],
  xTicks: T_TICKS, xMinor: 4, yTicks: [0, 0.2, 0.4, 0.6, 0.8], yMinor: 0.2 / 3, yTitle: '可靠度'
}), p => 1 - p);

// PDF with histogram
(function () {
  const f = frame({
    left: 66.5, right: 393.5, top: 10.5, bottom: 217.5,
    x: [20, 73.5, 100, 364.5], y: [0, 217.5, 0.025, 38.5],
    xTicks: T_TICKS, xMinor: 4, yTicks: [0, 0.005, 0.01, 0.015, 0.02, 0.025], yMinor: 0.005 / 3, yTitle: '密度'
  });
  const bins = [0.0089, 0.0067, 0.0089, 0.03, 0.01774, 0.0089, 0.0033, 0.0039, 0.0066, 0.0106];
  const outline = [[18, 0]];
  bins.forEach((h, i) => outline.push([18 + i * 9, h], [27 + i * 9, h]));
  outline.push([108, 0]);
  let content = `<path d="${path(f, outline)}" fill="#b1c8e0" fill-opacity=".5" stroke="#8fa3bd" stroke-opacity=".8"/>`;
  DISTS.forEach(d => { content += curve(f, TIMES.map(t => [t, d.pdf(t)]), d.color); });
  draw('pdf', f, content, [['直方图', 'pale'], ...distLegend]);
})();

// Quantile chart
(function () {
  const f = frame({
    left: 57.5, right: 393.5, top: 10.5, bottom: 217.5,
    x: [0, 57.5, 1, 393.5], y: [100, 166.5, 500, 29.5],
    yTicks: [0, 100, 200, 300, 400, 500], yMinor: 100 / 3, yTitle: '故障时间(h)'
  });
  const probs = [0.001];
  for (let i = 1; i < 100; i++) probs.push(i / 100);
  probs.push(0.999);
  let content = dots(f, RANKS.map(r => [r.p, r.t]));
  DISTS.forEach(d => { content += curve(f, probs.map(p => [p, d.inv(p)]), d.color); });
  draw('quantile', f, content, pointLegend);
})();

// Hazard chart
(function () {
  const f = frame({
    left: 60.5, right: 393.5, top: 10.5, bottom: 217.5,
    x: [18, 60.5, 108, 393.5], y: [0.01, 189.5, 0.07, 21.5],
    xTicks: T_TICKS, xMinor: 4, yTicks: [0, 0.01, 0.02, 0.03, 0.04, 0.05, 0.06, 0.07], yMinor: 0.01 / 3, yTitle: '风险率'
  });
  const content = DISTS.map(d => curve(f, TIMES.map(t => [t, d.pdf(t) / (1 - d.cdf(t))]), d.color)).join('');
  draw('hazard', f, content, distLegend);
})();

// Box plot
(function () {
  const y = v => 17.5 + (80 - v) * 2.9;
  let s = '<svg class="plot" viewBox="0 0 494 267" role="img">';
  s += '<rect x="62.5" y="17.5" width="417" height="232" fill="none" stroke="#000"/><path d="M271.5 17V249" stroke="#000"/>';
  [80, 60, 40, 20].forEach(v => {
    s += `<path d="M57 ${y(v)}H480" stroke="#000"/><text class="arial" x="54" y="${y(v) + 5}" text-anchor="end">${v}</text>`;
  });
  s += `<rect x="187" y="79" width="167" height="53" fill="#418cf0"/>
    <path d="M229 57.5H313M229 171.5H313M271.5 132V171" stroke="#418cf0"/>
    <path d="M187 101.5H355" stroke="#1f4f94" stroke-dasharray="20 17"/><path d="M187 106.5H355" stroke="#1f4f94"/>`;
  UNITS.filter(v => v > 0).forEach(v => { s += `<circle cx="271.5" cy="${y(v)}" r="3" fill="#0f0"/>`; });
  s += '<text class="title small" transform="translate(28 133) rotate(-90)">故障时间(h)</text></svg>';
  document.getElementById('box').innerHTML = s;
})();
```
